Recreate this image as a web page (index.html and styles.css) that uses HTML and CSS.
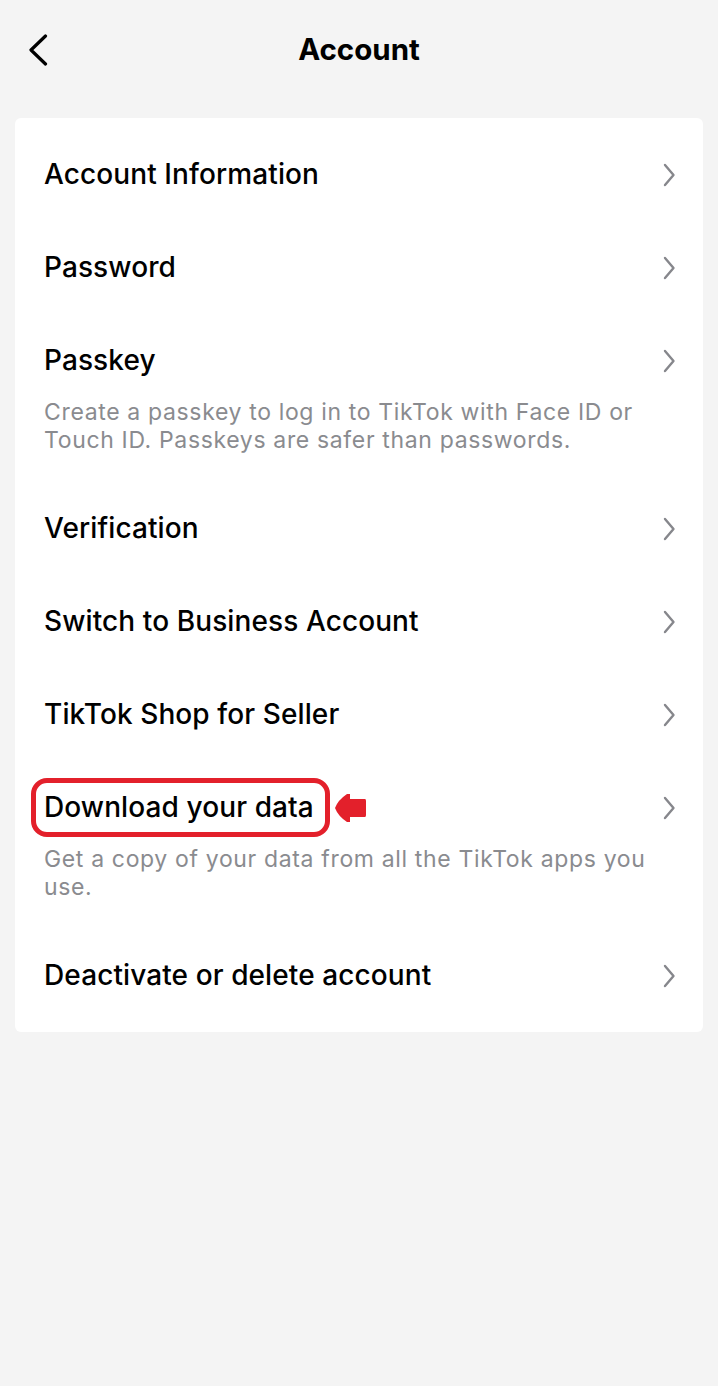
FILE: index.html
```html
<!DOCTYPE html>
<html>
<head>
<meta charset="utf-8">
<link rel="stylesheet" href="styles.css">
</head>
<body>
<div class="page">
  <header class="topbar">
    <svg class="back" width="20" height="32" viewBox="0 0 20 32"><path d="M17.5 2 L3 16 L17.5 30" fill="none" stroke="#000" stroke-width="3.2" stroke-linecap="round" stroke-linejoin="round"/></svg>
    <h1 class="title">Account</h1>
  </header>
  <main class="card">
    <div class="row"><div class="row-head"><span class="label">Account Information</span><svg class="chev" viewBox="0 0 14 24"><path d="M3 2 L11.5 12 L3 22" fill="none" stroke="#86878c" stroke-width="2.4" stroke-linecap="round" stroke-linejoin="round"/></svg></div></div>
    <div class="row"><div class="row-head"><span class="label">Password</span><svg class="chev" viewBox="0 0 14 24"><path d="M3 2 L11.5 12 L3 22" fill="none" stroke="#86878c" stroke-width="2.4" stroke-linecap="round" stroke-linejoin="round"/></svg></div></div>
    <div class="row has-desc"><div class="row-head"><span class="label">Passkey</span><svg class="chev" viewBox="0 0 14 24"><path d="M3 2 L11.5 12 L3 22" fill="none" stroke="#86878c" stroke-width="2.4" stroke-linecap="round" stroke-linejoin="round"/></svg></div><p class="desc">Create a passkey to log in to TikTok with Face ID or Touch ID. Passkeys are safer than passwords.</p></div>
    <div class="row"><div class="row-head"><span class="label">Verification</span><svg class="chev" viewBox="0 0 14 24"><path d="M3 2 L11.5 12 L3 22" fill="none" stroke="#86878c" stroke-width="2.4" stroke-linecap="round" stroke-linejoin="round"/></svg></div></div>
    <div class="row"><div class="row-head"><span class="label">Switch to Business Account</span><svg class="chev" viewBox="0 0 14 24"><path d="M3 2 L11.5 12 L3 22" fill="none" stroke="#86878c" stroke-width="2.4" stroke-linecap="round" stroke-linejoin="round"/></svg></div></div>
    <div class="row"><div class="row-head"><span class="label">TikTok Shop for Seller</span><svg class="chev" viewBox="0 0 14 24"><path d="M3 2 L11.5 12 L3 22" fill="none" stroke="#86878c" stroke-width="2.4" stroke-linecap="round" stroke-linejoin="round"/></svg></div></div>
    <div class="row has-desc"><div class="row-head"><span class="label marked">Download your data<span class="mark-ring"></span><svg class="mark-arrow" width="33" height="30" viewBox="0 0 33 30"><path d="M1 15 Q4 7 13 1 L16 1 L16 6 L31 6 Q32 6 32 8 L32 22 Q32 24 31 24 L16 24 L16 29 L13 29 Q4 23 1 15 Z" fill="#e3202b"/></svg></span><svg class="chev" viewBox="0 0 14 24"><path d="M3 2 L11.5 12 L3 22" fill="none" stroke="#86878c" stroke-width="2.4" stroke-linecap="round" stroke-linejoin="round"/></svg></div><p class="desc">Get a copy of your data from all the TikTok apps you use.</p></div>
    <div class="row"><div class="row-head"><span class="label">Deactivate or delete account</span><svg class="chev" viewBox="0 0 14 24"><path d="M3 2 L11.5 12 L3 22" fill="none" stroke="#86878c" stroke-width="2.4" stroke-linecap="round" stroke-linejoin="round"/></svg></div></div>
  </main>
</div>
</body>
</html>
```

FILE: styles.css
```css
* { box-sizing: border-box; }
html, body { margin: 0; padding: 0; }
body {
  background: #f4f4f4;
  font-family: Inter, Roboto, "Liberation Sans", sans-serif;
  color: #161823;
  width: 718px;
  min-height: 1386px;
}
.page { padding: 0 15px; }
.topbar {
  position: relative;
  height: 118px;
  display: flex;
  align-items: flex-start;
  justify-content: center;
  padding-top: 30px;
}
.back {
  position: absolute;
  left: 13px;
  top: 34px;
}
.title {
  margin: 0;
  font-size: 29.5px;
  font-weight: 700;
  line-height: 38px;
  color: #000;
}
.card {
  background: #fff;
  border-radius: 6px;
  padding: 10px 0;
}
.row {
  padding: 32px 27px 32px 29px;
}
.row.has-desc { padding-bottom: 28.5px; }
.row-head {
  display: flex;
  align-items: center;
  justify-content: space-between;
  height: 29px;
}
.label {
  font-size: 28px;
  font-weight: 500;
  line-height: 29px;
  letter-spacing: 0.1px;
  color: #000;
}
.chev { width: 14px; height: 24px; flex: none; }
.desc {
  margin: 22.5px 0 0 0;
  max-width: 625px;
  font-size: 23px;
  letter-spacing: 0.65px;
  line-height: 28px;
  color: #8a8b8f;
}
.marked { position: relative; }
.mark-ring {
  position: absolute;
  left: -13px;
  top: -15px;
  width: 299px;
  height: 59px;
  border: 5px solid #e3202b;
  border-radius: 16px;
}
.mark-arrow {
  position: absolute;
  left: 290px;
  top: 0px;
}
```
